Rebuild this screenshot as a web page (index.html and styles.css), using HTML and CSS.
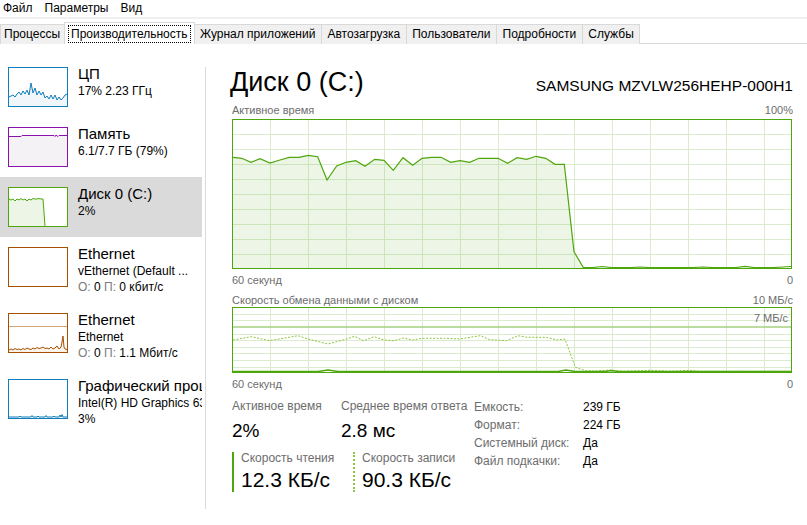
FILE: index.html
```html
<!DOCTYPE html>
<html lang="ru">
<head>
<meta charset="utf-8">
<title>Диспетчер задач</title>
<link rel="stylesheet" href="styles.css">
</head>
<body>
<div class="menubar">
  <span class="menu-item">Файл</span>
  <span class="menu-item">Параметры</span>
  <span class="menu-item">Вид</span>
</div>
<div class="tabs">
  <div class="tab">Процессы</div>
  <div class="tab active"><span class="focus">Производительность</span></div>
  <div class="tab">Журнал приложений</div>
  <div class="tab">Автозагрузка</div>
  <div class="tab">Пользователи</div>
  <div class="tab">Подробности</div>
  <div class="tab">Службы</div>
</div>
<div class="main">
  <div class="sidebar">
    <div class="item">
      <div class="thumb cpu">
        <svg width="58" height="38" viewBox="0 0 58 38">
          <path class="fill-cpu" d="M0,29 L2,28 L4,27 L6,29 L8,26 L10,24 L12,27 L14,23 L16,26 L18,22 L20,27 L22,15 L24,25 L26,20 L28,27 L30,23 L32,27 L34,24 L36,30 L38,28 L40,31 L42,27 L44,31 L46,27 L48,32 L50,29 L52,32 L54,30 L56,27 L58,26 L58,38 L0,38 Z"/>
          <path class="line-cpu" d="M0,29 L2,28 L4,27 L6,29 L8,26 L10,24 L12,27 L14,23 L16,26 L18,22 L20,27 L22,15 L24,25 L26,20 L28,27 L30,23 L32,27 L34,24 L36,30 L38,28 L40,31 L42,27 L44,31 L46,27 L48,32 L50,29 L52,32 L54,30 L56,27 L58,26"/>
        </svg>
      </div>
      <div class="info">
        <div class="name">ЦП</div>
        <div class="sub">17% 2.23 ГГц</div>
      </div>
    </div>
    <div class="item">
      <div class="thumb mem">
        <svg width="58" height="38" viewBox="0 0 58 38">
          <path class="fill-mem" d="M0,8.5 L12,8.5 L13,7.5 L45,7.5 L46,8.5 L47,7 L49,8.5 L50,7.5 L58,7.5 L58,38 L0,38 Z"/>
          <path class="line-mem" d="M0,8.5 L12,8.5 L13,7.5 L45,7.5 L46,8.5 L47,7 L49,8.5 L50,7.5 L58,7.5"/>
        </svg>
      </div>
      <div class="info">
        <div class="name">Память</div>
        <div class="sub">6.1/7.7 ГБ (79%)</div>
      </div>
    </div>
    <div class="item selected">
      <div class="thumb disk">
        <svg width="58" height="38" viewBox="0 0 58 38">
          <path class="fill-disk" d="M0,11 L2,12 L4,11 L6,13 L8,11 L10,12 L12,10.5 L14,12 L16,11 L18,13 L20,11 L22,12 L24,10.5 L26,11 L28,11 L30,10.5 L32,11 L34,11 L36,38 L0,38 Z"/>
          <path class="line-disk" d="M0,11 L2,12 L4,11 L6,13 L8,11 L10,12 L12,10.5 L14,12 L16,11 L18,13 L20,11 L22,12 L24,10.5 L26,11 L28,11 L30,10.5 L32,11 L34,11 L36,38"/>
        </svg>
      </div>
      <div class="info">
        <div class="name">Диск 0 (C:)</div>
        <div class="sub">2%</div>
      </div>
    </div>
    <div class="item tall">
      <div class="thumb eth"></div>
      <div class="info">
        <div class="name">Ethernet</div>
        <div class="sub">vEthernet (Default ...</div>
        <div class="sub"><span class="dim">О:</span> 0 <span class="dim">П:</span> 0 кбит/с</div>
      </div>
    </div>
    <div class="item tall">
      <div class="thumb eth">
        <svg width="58" height="38" viewBox="0 0 58 38">
          <line class="cap-eth" x1="0" y1="12.5" x2="58" y2="12.5"/>
          <path class="fill-eth" d="M0,36 L2,35 L4,36 L6,34.5 L8,35.5 L10,35 L12,36 L14,34.5 L16,35.5 L18,34 L20,35 L22,35.5 L24,34 L26,35 L28,33.5 L30,34.5 L32,34 L34,33 L36,34.5 L38,34 L40,35 L42,33 L44,35 L46,34 L48,32 L50,35 L52,33 L53,28 L54,22 L55,33 L56,35 L58,35.5 L58,38 L0,38 Z"/>
          <path class="line-eth" d="M0,36 L2,35 L4,36 L6,34.5 L8,35.5 L10,35 L12,36 L14,34.5 L16,35.5 L18,34 L20,35 L22,35.5 L24,34 L26,35 L28,33.5 L30,34.5 L32,34 L34,33 L36,34.5 L38,34 L40,35 L42,33 L44,35 L46,34 L48,32 L50,35 L52,33 L53,28 L54,22 L55,33 L56,35 L58,35.5"/>
        </svg>
      </div>
      <div class="info">
        <div class="name">Ethernet</div>
        <div class="sub">Ethernet</div>
        <div class="sub"><span class="dim">О:</span> 0 <span class="dim">П:</span> 1.1 Мбит/с</div>
      </div>
    </div>
    <div class="item">
      <div class="thumb gpu">
        <svg width="58" height="38" viewBox="0 0 58 38">
          <path class="fill-cpu" d="M0,37 L10,37 L11,36 L12,37 L22,37 L23,35.5 L24,37 L28,37 L29,36 L30,37 L36,37 L37,35.5 L38,37 L44,37 L45,36 L46,37 L50,37 L51,35 L52,37 L53,34.5 L54,37 L58,37 L58,38 L0,38 Z"/>
          <path class="line-cpu" d="M0,37 L10,37 L11,36 L12,37 L22,37 L23,35.5 L24,37 L28,37 L29,36 L30,37 L36,37 L37,35.5 L38,37 L44,37 L45,36 L46,37 L50,37 L51,35 L52,37 L53,34.5 L54,37 L58,37"/>
        </svg>
      </div>
      <div class="info">
        <div class="name">Графический процессор 0</div>
        <div class="sub">Intel(R) HD Graphics 630</div>
        <div class="sub">3%</div>
      </div>
    </div>
  </div>
  <div class="splitter"></div>
  <div class="detail">
    <div class="head">
      <div class="title">Диск 0 (C:)</div>
      <div class="model">SAMSUNG MZVLW256HEHP-000H1</div>
    </div>
    <div class="axis top"><span>Активное время</span><span>100%</span></div>
    <div class="chart chart-big">
      <svg width="558" height="148" viewBox="0 0 558 148">
        <path class="fill-disk" d="M0,37.3 L8.7,38.3 L18,42.3 L27,38.7 L37,43 L47,40 L56.3,37.3 L66,37.3 L75.3,35.3 L84.7,36.7 L94,60 L103.7,46 L113,42.3 L122.7,40.7 L132,46.3 L141.7,39.3 L151,40.3 L160.3,50.3 L170,37.7 L179.7,45.3 L189,38.3 L198.7,37.3 L208,37.3 L217.7,42.3 L227,40.7 L236.7,42.3 L246,38.3 L255.7,38.3 L265,38.3 L274.7,43.3 L284,37.7 L293.7,39.3 L303,36.3 L312.7,38.3 L322,44.3 L331.3,44.3 L341,131.7 L350.3,148 L0,148 Z"/>
        <path class="line-big" d="M0,37.3 L8.7,38.3 L18,42.3 L27,38.7 L37,43 L47,40 L56.3,37.3 L66,37.3 L75.3,35.3 L84.7,36.7 L94,60 L103.7,46 L113,42.3 L122.7,40.7 L132,46.3 L141.7,39.3 L151,40.3 L160.3,50.3 L170,37.7 L179.7,45.3 L189,38.3 L198.7,37.3 L208,37.3 L217.7,42.3 L227,40.7 L236.7,42.3 L246,38.3 L255.7,38.3 L265,38.3 L274.7,43.3 L284,37.7 L293.7,39.3 L303,36.3 L312.7,38.3 L322,44.3 L331.3,44.3 L341,131.7 L350.3,147.5 L360,147.5 L369,146.5 L378,147.5 L398,147.5 L407,147 L416,147.5 L460,147.5 L470,147 L480,147.5 L503,147.5 L512,146.3 L521,147.5 L540,147.5 L550,147 L558,146.5"/>
      </svg>
    </div>
    <div class="axis"><span>60 секунд</span><span>0</span></div>
    <div class="axis"><span>Скорость обмена данными с диском</span><span>10 МБ/с</span></div>
    <div class="chart chart-small">
      <svg width="558" height="64" viewBox="0 0 558 64">
        <path class="hgrid" d="M0,6.5 H558 M0,12.5 H558 M0,26.5 H558 M0,32.5 H558 M0,39.5 H558 M0,45.5 H558 M0,52.5 H558 M0,59.5 H558"/>
        <line class="cap-line" x1="0" y1="19" x2="558" y2="19"/>
        <path class="write-line" d="M0,32 L18,28.7 L36.8,32.7 L65,27.7 L75,31 L95,36 L113.8,31 L121.3,28.3 L130.7,32.7 L140.9,28.7 L151.4,32 L160.8,32.7 L170.2,30 L179.6,32 L189,30.3 L211.6,30.3 L226.6,31 L247.3,27.7 L256.7,31.7 L273.6,32.7 L284.9,27.7 L294.3,29.3 L313,29.3 L324.4,32 L331.9,31 L342.4,59.3 L352.5,62.7 L362,63 L377,62 L390,63.3 L418.3,62.3 L437,63.3 L456,62.3 L467,63.3 L558,63.3"/>
        <path class="read-line" d="M0,63.5 L85,63.5 L95,62 L105,63.5 L325,63.5 L333,62 L342,63.5 L372,63.5 L378,62.5 L385,63.5 L558,63.5"/>
      </svg>
      <span class="cap-label">7 МБ/с</span>
    </div>
    <div class="axis"><span>60 секунд</span><span>0</span></div>
    <div class="stats">
      <div class="stats-left">
        <div class="stat-row">
          <div class="stat first">
            <div class="stat-label">Активное время</div>
            <div class="stat-value">2%</div>
          </div>
          <div class="stat">
            <div class="stat-label">Среднее время ответа</div>
            <div class="stat-value">2.8 мс</div>
          </div>
        </div>
        <div class="stat-row">
          <div class="speed read">
            <div class="stat-label">Скорость чтения</div>
            <div class="speed-value">12.3 КБ/с</div>
          </div>
          <div class="speed write">
            <div class="stat-label">Скорость записи</div>
            <div class="speed-value">90.3 КБ/с</div>
          </div>
        </div>
      </div>
      <div class="props">
        <div class="prop-key">Емкость:</div><div class="prop-val">239 ГБ</div>
        <div class="prop-key">Формат:</div><div class="prop-val">224 ГБ</div>
        <div class="prop-key">Системный диск:</div><div class="prop-val">Да</div>
        <div class="prop-key">Файл подкачки:</div><div class="prop-val">Да</div>
      </div>
    </div>
  </div>
</div>
</body>
</html>
```

FILE: styles.css
```css
* { box-sizing: border-box; }

html, body {
  margin: 0;
  padding: 0;
  background: #ffffff;
}

body {
  width: 807px;
  height: 525px;
  overflow: hidden;
  font-family: "Liberation Sans", Arial, sans-serif;
  font-size: 12px;
  color: #000;
}

/* menu */
.menubar {
  display: flex;
  gap: 12px;
  height: 19px;
  padding-left: 3px;
  line-height: 17px;
  border-bottom: 2px solid #f0f0f0;
}

/* tabs */
.tabs {
  display: flex;
  align-items: flex-end;
  height: 25px;
  padding-top: 3px;
  border-bottom: 1px solid #d9d9d9;
}

.tab {
  height: 20px;
  line-height: 18px;
  padding: 0 5.5px;
  background: #f0f0f0;
  border: 1px solid #d9d9d9;
  border-bottom: none;
  margin-right: -1px;
  white-space: nowrap;
  position: relative;
  top: 1px;
}

.tab:first-child { padding: 0 4px 0 3px; }

.tab.active {
  height: 22px;
  background: #ffffff;
  padding: 2px 4px 0;
  z-index: 1;
}

.focus {
  display: inline-block;
  outline: 1px dotted #000;
  outline-offset: 0;
  padding: 0 2px;
  line-height: 16px;
}

/* main */
.main {
  display: flex;
  height: 481px;
}

.sidebar {
  width: 202px;
  padding-top: 13px;
  overflow: hidden;
  flex: none;
}

.item {
  display: flex;
  height: 60px;
  padding-left: 8px;
  white-space: nowrap;
}

.item.tall { height: 66px; }

.item.selected { background: #dadada; }

.thumb {
  flex: none;
  width: 60px;
  height: 40px;
  margin-top: 10px;
  border: 1px solid;
  background: #fff;
}

.thumb svg { display: block; }

.thumb.cpu, .thumb.gpu { border-color: #117dbb; }
.thumb.mem { border-color: #8b12ae; }
.thumb.disk { border-color: #4da60c; }
.thumb.eth { border-color: #a74f01; }

.fill-cpu { fill: #f1f6fa; }
.line-cpu { fill: none; stroke: #117dbb; stroke-width: 1; }
.fill-mem { fill: #f4f2f4; }
.line-mem { fill: none; stroke: #8b12ae; stroke-width: 1; }
.fill-disk { fill: rgba(77, 166, 12, 0.1); }
.line-disk { fill: none; stroke: #4da60c; stroke-width: 1; }
.fill-eth { fill: #fcf3eb; }
.line-eth { fill: none; stroke: #a74f01; stroke-width: 1; }
.cap-eth { stroke: #d3a577; stroke-width: 1; }

.info {
  margin-left: 10px;
  padding-top: 7px;
}

.name {
  font-size: 15px;
  line-height: 19px;
}

.sub {
  font-size: 12px;
  line-height: 16px;
}

.dim { color: #7a7a7a; }

.splitter {
  flex: none;
  width: 1px;
  height: 442px;
  margin: 23px 0 0 3px;
  background: #d9d9d9;
}

/* detail */
.detail {
  flex: 1;
  padding: 20px 14px 0 26px;
}

.head {
  display: flex;
  justify-content: space-between;
  align-items: baseline;
  height: 36px;
}

.title {
  font-size: 27px;
  line-height: 36px;
  margin-left: -2px;
}

.model {
  font-size: 15.5px;
}

.axis {
  display: flex;
  justify-content: space-between;
  font-size: 11px;
  line-height: 18px;
  color: #6d6d6d;
  padding-top: 2px;
}

.axis.top {
  line-height: 16px;
  margin-top: 2px;
  margin-bottom: 1px;
  padding-top: 0;
}

.chart {
  position: relative;
  width: 560px;
  border: 1px solid #4da60c;
  background-image:
    linear-gradient(90deg, #dbebcd 1px, transparent 1px);
  background-size: 38px 100%;
  background-position: 37px 0;
}

.chart svg { display: block; }

.chart-big {
  height: 150px;
  background-image:
    linear-gradient(90deg, #dbebcd 1px, transparent 1px),
    linear-gradient(#dbebcd 1px, transparent 1px);
  background-size: 38px 100%, 100% 15px;
  background-position: 37px 0, 0 14px;
}

.chart-small { height: 66px; margin-top: -2px; }

.line-big { fill: none; stroke: #4da60c; stroke-width: 1.2; }

.hgrid { fill: none; stroke: #dbebcd; stroke-width: 1; }
.cap-line { stroke: #a3d07f; stroke-width: 1.6; }
.write-line { fill: none; stroke: #8dc63f; stroke-width: 1; stroke-dasharray: 2 1.5; }
.read-line { fill: none; stroke: #4da60c; stroke-width: 1.5; }

.cap-label {
  position: absolute;
  right: 3px;
  top: 2px;
  font-size: 11px;
  line-height: 16px;
  color: #6d6d6d;
}

/* stats */
.stats {
  display: flex;
  margin-top: 5px;
}

.stats-left {
  width: 242px;
  flex: none;
}

.stat-row { display: flex; }

.stat.first { width: 109px; }

.stat-label {
  font-size: 12px;
  line-height: 16px;
  color: #6d6d6d;
  white-space: nowrap;
}

.stat-value {
  font-size: 19px;
  line-height: 30px;
  padding-top: 2px;
}

.speed {
  margin-top: 6px;
  height: 40px;
  padding-left: 7px;
}

.speed.read {
  width: 121px;
  border-left: 2px solid #4da60c;
}

.speed.write {
  border-left: 2px dotted #8dc63f;
}

.speed .stat-label {
  line-height: 12px;
}

.speed-value {
  font-size: 21px;
  line-height: 32px;
}

.props {
  display: grid;
  grid-template-columns: 109px auto;
  grid-auto-rows: 18px;
  font-size: 12px;
  line-height: 18px;
}

.prop-key { color: #6d6d6d; }
.prop-val { color: #000; }
```
